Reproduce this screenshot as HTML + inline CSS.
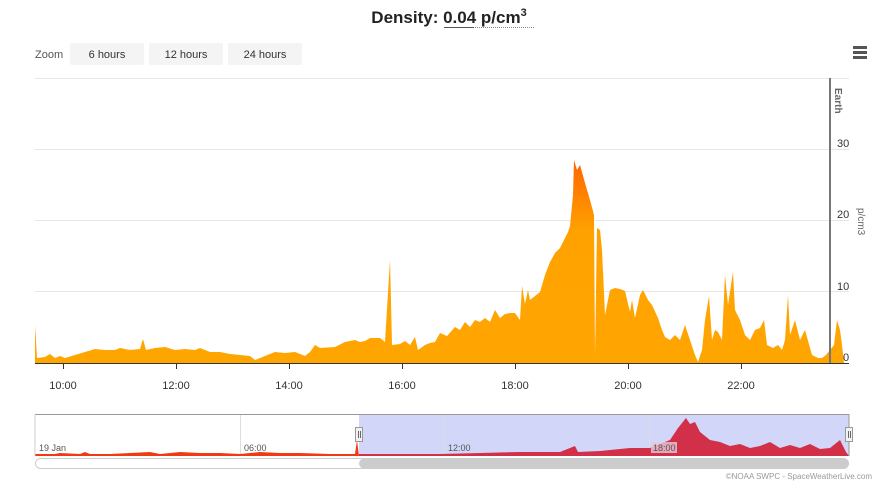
<!DOCTYPE html>
<html><head><meta charset="utf-8"><style>
body{margin:0;background:#fff;font-family:"Liberation Sans",sans-serif;}
svg text{font-family:"Liberation Sans",sans-serif;}
</style></head><body>
<svg width="888" height="487" viewBox="0 0 888 487" xmlns="http://www.w3.org/2000/svg">
<defs>
<linearGradient id="g" x1="0" y1="160" x2="0" y2="363" gradientUnits="userSpaceOnUse">
<stop offset="0" stop-color="#ff6400"/><stop offset="0.35" stop-color="#ffa200"/><stop offset="1" stop-color="#ffa500"/>
</linearGradient>
</defs>
<text x="449" y="23" text-anchor="middle" font-size="17" font-weight="bold" fill="#222">Density: 0.04 p/cm<tspan font-size="11" dy="-7">3</tspan></text>
<line x1="444" y1="27.5" x2="474" y2="27.5" stroke="#555"/>
<line x1="475" y1="27.5" x2="535" y2="27.5" stroke="#888" stroke-dasharray="1,1"/>
<text x="35" y="58" font-size="11" fill="#555">Zoom</text>
<rect x="70" y="43" width="74" height="22" rx="2" fill="#f4f4f4"/><text x="107" y="58" font-size="11" fill="#333" text-anchor="middle">6 hours</text>
<rect x="149" y="43" width="74" height="22" rx="2" fill="#f4f4f4"/><text x="186" y="58" font-size="11" fill="#333" text-anchor="middle">12 hours</text>
<rect x="228" y="43" width="74" height="22" rx="2" fill="#f4f4f4"/><text x="265" y="58" font-size="11" fill="#333" text-anchor="middle">24 hours</text>
<g fill="#555"><rect x="853" y="46" width="14" height="3"/><rect x="853" y="51" width="14" height="3"/><rect x="853" y="56" width="14" height="3"/></g>
<g stroke="#e6e6e6"><line x1="35" y1="78.5" x2="849" y2="78.5"/><line x1="35" y1="149.5" x2="849" y2="149.5"/><line x1="35" y1="220.5" x2="849" y2="220.5"/><line x1="35" y1="291.5" x2="849" y2="291.5"/></g>
<path fill="url(#g)" d="M35,363 L35,325 37,358 45,357 50,354 55,358 60,356 65,358 75,355 85,352 95,349 105,350 115,350 120,348 130,350 140,349 143,339 146,350 155,348 165,347 175,350 185,349 195,350 200,348 210,352 220,352 230,354 250,356 255,360 265,356 275,352 285,353 295,352 305,356 310,352 315,345 320,348 335,347 345,342 355,340 360,342 365,341 370,338 380,338 385,342 390,260 392,345 400,344 405,341 410,345 415,337 418,350 425,345 430,343 435,342 440,333 447,336 455,327 460,330 465,322 470,327 475,320 480,322 485,318 490,322 495,310 500,318 505,314 510,313 515,313 520,320 522,286 525,304 528,290 530,300 535,296 540,292 545,275 550,262 555,253 560,248 565,238 568,232 570,226 573,195 574,160 577,170 580,165 585,183 590,200 594,215 595,356 597,228 600,230 602,250 605,315 610,290 615,288 620,289 625,291 630,312 632,300 635,318 640,295 643,290 648,300 652,305 658,318 662,330 665,337 670,340 675,335 680,340 685,325 690,340 695,355 698,362 702,350 705,320 709,296 712,340 715,330 718,332 722,340 725,275 728,305 733,272 735,310 740,320 745,335 750,340 755,330 760,328 764,320 767,345 773,348 778,345 782,350 785,340 788,295 790,335 795,320 800,340 805,330 812,355 818,358 822,358 826,355 830,350 834,345 837,320 840,330 842,345 844,363 Z"/>
<line x1="830" y1="78" x2="830" y2="363" stroke="#777" stroke-width="2"/>
<text x="0" y="0" font-size="10" font-weight="bold" fill="#666" transform="translate(835,88) rotate(90)">Earth</text>
<line x1="35" y1="363.5" x2="849" y2="363.5" stroke="#333"/>
<g stroke="#333"><line x1="63.5" y1="363" x2="63.5" y2="369"/><line x1="176.5" y1="363" x2="176.5" y2="369"/><line x1="289.5" y1="363" x2="289.5" y2="369"/><line x1="402.5" y1="363" x2="402.5" y2="369"/><line x1="515.5" y1="363" x2="515.5" y2="369"/><line x1="628.5" y1="363" x2="628.5" y2="369"/><line x1="741.5" y1="363" x2="741.5" y2="369"/></g>
<g font-size="11" fill="#333" text-anchor="middle"><text x="63" y="389">10:00</text><text x="176" y="389">12:00</text><text x="289" y="389">14:00</text><text x="402" y="389">16:00</text><text x="515" y="389">18:00</text><text x="628" y="389">20:00</text><text x="741" y="389">22:00</text></g>
<g font-size="11" fill="#333"><text x="837" y="147">30</text><text x="837" y="218">20</text><text x="837" y="290">10</text><text x="843" y="361">0</text></g>
<text font-size="10" fill="#666" transform="translate(858,208) rotate(90)">p/cm3</text>
<rect x="359" y="414" width="490" height="42" fill="#d2d6f8"/>
<g stroke="#ddd"><line x1="240.5" y1="414" x2="240.5" y2="456"/><line x1="444.5" y1="414" x2="444.5" y2="456"/><line x1="649.5" y1="414" x2="649.5" y2="456"/></g>
<path fill="#f03a14" d="M35,456 L35,454 55,454 60,453 80,454 85,452 90,454 110,454 130,453 150,452 160,454 180,452 200,453 220,453 240,454 260,452 280,453 300,453 330,454 355,454 357,440 359,456 Z"/>
<path fill="#d23048" d="M359,456 L359,454 400,454 440,454 480,453 520,452 560,452 575,446 578,452 600,451 630,448 650,448 660,444 670,440 678,428 686,418 690,424 695,422 700,432 705,436 710,440 720,442 730,446 740,444 750,448 760,446 770,442 780,448 790,445 800,448 810,444 820,449 830,448 840,440 846,452 849,456 Z"/>
<line x1="35" y1="414.5" x2="849" y2="414.5" stroke="#999"/>
<line x1="35" y1="414" x2="35" y2="456" stroke="#ccc"/><line x1="849" y1="414" x2="849" y2="456" stroke="#999"/>
<rect x="651" y="442" width="26" height="11" fill="#e8c8d8" opacity="0.8"/>
<g font-size="9" fill="#555"><text x="39" y="451">19 Jan</text><text x="244" y="451">06:00</text><text x="448" y="451">12:00</text><text x="653" y="451">18:00</text></g>
<rect x="355.5" y="427.5" width="7" height="14" fill="#f2f2f2" stroke="#999"/><line x1="358.5" y1="431" x2="358.5" y2="438" stroke="#666"/><line x1="360.5" y1="431" x2="360.5" y2="438" stroke="#666"/>
<rect x="845.5" y="427.5" width="7" height="14" fill="#f2f2f2" stroke="#999"/><line x1="848.5" y1="431" x2="848.5" y2="438" stroke="#666"/><line x1="850.5" y1="431" x2="850.5" y2="438" stroke="#666"/>
<rect x="35.5" y="458.5" width="813" height="10" rx="5" fill="#fff" stroke="#ccc"/>
<rect x="359" y="458.5" width="490" height="10" rx="5" fill="#ccc"/>
<text x="872" y="479" font-size="8" fill="#999" text-anchor="end">©NOAA SWPC - SpaceWeatherLive.com</text>
</svg>
</body></html>
